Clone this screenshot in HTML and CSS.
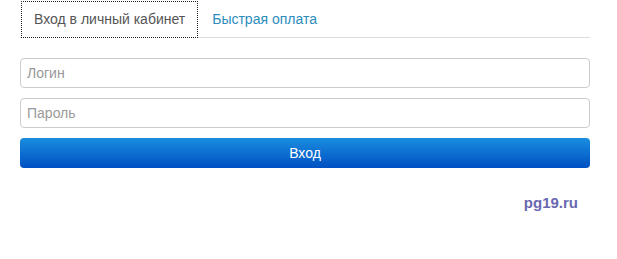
FILE: index.html
```html
<!DOCTYPE html>
<html lang="ru">

<head>
    <meta charset="UTF-8">
    <title>Личный кабинет</title>
    <link rel="stylesheet" href="styles.css">
</head>

<body>

    <div class="wrapper">
        <ul class="tabs">
            <li class="tab active"><a href="#">Вход в личный кабинет</a></li>
            <li class="tab"><a href="#">Быстрая оплата</a></li>
        </ul>

        <form class="login-form">
            <input type="text" class="field" placeholder="Логин">
            <input type="password" class="field" placeholder="Пароль">
            <button type="button" class="btn-login">Вход</button>
        </form>

        <div class="site">pg19.ru</div>
    </div>

</body>

</html>
```

FILE: styles.css
```css
body {
    margin: 0;
    background: #fff;
    font-family: "Liberation Sans", Arial, sans-serif;
    font-size: 14px;
    color: #555;
}

.wrapper {
    width: 570px;
    padding: 1px 0 0 20px;
}

.tabs {
    display: flex;
    list-style: none;
    margin: 0;
    padding: 0;
    border-bottom: 1px solid #ddd;
}

.tab a {
    display: block;
    padding: 8px 12px;
    line-height: 19px;
    text-decoration: none;
    color: #2b8cbd;
    border: 1px solid transparent;
    margin-bottom: -1px;
}

.tab.active a {
    color: #555;
    border: 1px dotted #222;
    margin-left: 1px;
    background: #fff;
}

.tab + .tab a {
    margin-left: 1px;
}

.login-form {
    display: flex;
    flex-direction: column;
    gap: 10px;
    margin-top: 20px;
}

.field {
    height: 30px;
    box-sizing: border-box;
    padding: 4px 6px;
    border: 1px solid #ccc;
    border-radius: 4px;
    font-family: inherit;
    font-size: 14px;
    color: #555;
}

.field::placeholder {
    color: #999;
}

.btn-login {
    height: 30px;
    border: none;
    border-radius: 4px;
    background: linear-gradient(#1a8de0, #0050c2);
    color: #fff;
    font-family: inherit;
    font-size: 14px;
    cursor: pointer;
}

.site {
    text-align: right;
    margin: 26px 12px 0 0;
    font-weight: bold;
    font-size: 15px;
    color: #6868b0;
}
```
